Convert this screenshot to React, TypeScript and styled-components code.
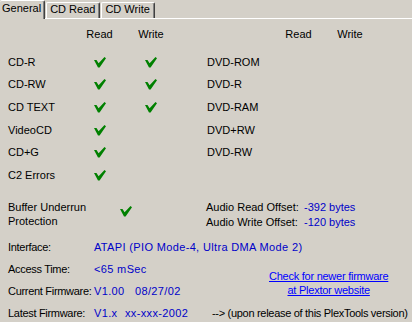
import React from 'react'
import styled, { createGlobalStyle } from 'styled-components'

const GlobalStyle = createGlobalStyle`
  html, body {
    margin: 0;
    padding: 0;
    background: #d4d0c8;
  }
`

type Cap = [string, boolean, boolean]

const cdRows: Cap[] = [
	['CD-R', true, true],
	['CD-RW', true, true],
	['CD TEXT', true, true],
	['VideoCD', true, false],
	['CD+G', true, false],
	['C2 Errors', true, false],
]

const dvdRows: Cap[] = [
	['DVD-ROM', false, false],
	['DVD-R', false, false],
	['DVD-RAM', false, false],
	['DVD+RW', false, false],
	['DVD-RW', false, false],
	['', false, false],
]

function Check() {
	return (
		<CheckSvg viewBox="0 0 12 11" width="12" height="11">
			<polygon points="0,3 2.5,3 4.6,6.2 10.5,0 12,1.2 5.6,10.5 4,10.5" />
		</CheckSvg>
	)
}

function CapMatrix({ rows }: { rows: Cap[] }) {
	return (
		<Matrix>
			<span />
			<HeaderCell>Read</HeaderCell>
			<HeaderCell>Write</HeaderCell>
			{rows.map(([name, read, write], i) => (
				<React.Fragment key={i}>
					<Label>{name}</Label>
					<Mark>{read && <Check />}</Mark>
					<Mark>{write && <Check />}</Mark>
				</React.Fragment>
			))}
		</Matrix>
	)
}

export default function App() {
	return (
		<>
			<GlobalStyle />
			<Window>
				<TabStrip>
					<Tab $active>General</Tab>
					<Tab>CD Read</Tab>
					<Tab>CD Write</Tab>
				</TabStrip>

				<Capabilities>
					<CapMatrix rows={cdRows} />
					<CapMatrix rows={dvdRows} />
				</Capabilities>

				<Middle>
					<BufferBlock>
						<BufferLabel>Buffer Underrun<br />Protection</BufferLabel>
						<BufferCheck><Check /></BufferCheck>
					</BufferBlock>
					<Offsets>
						<span>Audio Read Offset:</span>
						<Value>-392 bytes</Value>
						<span>Audio Write Offset:</span>
						<Value>-120 bytes</Value>
					</Offsets>
				</Middle>

				<Info>
					<Key>Interface:</Key>
					<InfoValue $wide>ATAPI (PIO Mode-4, Ultra DMA Mode 2)</InfoValue>

					<Key>Access Time:</Key>
					<InfoValue>&lt;65 mSec</InfoValue>
					<LinkBox>
						<Link href="#">Check for newer firmware<br />at Plextor website</Link>
					</LinkBox>

					<Key>Current Firmware:</Key>
					<InfoValue>
						<Version $w={41}>V1.00</Version>08/27/02
					</InfoValue>

					<Key>Latest Firmware:</Key>
					<InfoValue>
						<Version $w={31}>V1.x</Version>xx-xxx-2002
					</InfoValue>
					<Note>--&gt; (upon release of this PlexTools version)</Note>
				</Info>
			</Window>
		</>
	)
}

const Window = styled.div`
    width: 412px;
    height: 322px;
    overflow: hidden;
    background: #d4d0c8;
    color: #000;
    font-family: "Liberation Sans", Arial, sans-serif;
    font-size: 11px;
    line-height: 13px;
`

const TabStrip = styled.div`
    display: flex;
    align-items: flex-end;
    height: 19px;
    background: linear-gradient(#fff, #fff) left bottom / 100% 1px no-repeat;
`

const Tab = styled.div<{ $active?: boolean }>`
    box-sizing: border-box;
    height: ${p => (p.$active ? '19px' : '16px')};
    margin: ${p => (p.$active ? '0' : '0 0 1px 1px')};
    padding: ${p => (p.$active ? '1px 3px 0 2px' : '0 4px 0 3px')};
    background: #d4d0c8;
    border-top: 1px solid #fff;
    border-left: ${p => (p.$active ? 'none' : '1px solid #fff')};
    border-right: 1px solid #404040;
    border-radius: 2px 2px 0 0;
    box-shadow: inset -1px 0 #808080;
    white-space: nowrap;
`

const Capabilities = styled.div`
    display: flex;
    gap: 44px;
    padding: 9px 0 0 8px;
`

const Matrix = styled.div`
    display: grid;
    grid-template-columns: 52px 25px 24px;
    grid-template-rows: 23px repeat(6, 22.6px);
    column-gap: 27px;
    align-items: center;
`

const HeaderCell = styled.span`
    align-self: start;
    justify-self: center;
    white-space: nowrap;
`

const Label = styled.span`
    white-space: nowrap;
`

const Mark = styled.span`
    display: flex;
    justify-content: center;
    align-items: center;
    height: 11px;
`

const CheckSvg = styled.svg`
    display: block;
    fill: #008000;
`

const Middle = styled.div`
    display: flex;
    align-items: flex-start;
    margin-top: 13px;
    padding-left: 8px;
`

const BufferBlock = styled.div`
    display: flex;
    width: 198px;
`

const BufferLabel = styled.div`
    width: 112px;
    line-height: 14px;
`

const BufferCheck = styled.div`
    margin-top: 6px;
`

const Offsets = styled.div`
    display: grid;
    grid-template-columns: 98px auto;
    grid-auto-rows: 15px;
    align-items: center;
    white-space: nowrap;
`

const Value = styled.span`
    color: #0000c8;
    white-space: nowrap;
`

const Info = styled.div`
    display: grid;
    grid-template-columns: 86px 118px 1fr;
    grid-auto-rows: 22px;
    align-items: center;
    margin-top: 7px;
    padding-left: 8px;
    white-space: nowrap;
`

const Key = styled.span`
    letter-spacing: -0.3px;
`

const InfoValue = styled.span<{ $wide?: boolean }>`
    color: #0000c8;
    letter-spacing: 0.35px;
    ${p => p.$wide && 'grid-column: 2 / -1;'}
`

const Version = styled.span<{ $w: number }>`
    display: inline-block;
    width: ${p => p.$w}px;
`

const LinkBox = styled.div`
    grid-column: 3;
    grid-row: 2 / span 2;
    align-self: start;
    margin-top: 10px;
    padding-left: 57px;
`

const Link = styled.a`
    display: inline-block;
    text-align: center;
    line-height: 14px;
    letter-spacing: -0.25px;
    color: #0000ff;
    text-decoration: underline;
`

const Note = styled.span`
    grid-column: 3;
    letter-spacing: -0.3px;
`
